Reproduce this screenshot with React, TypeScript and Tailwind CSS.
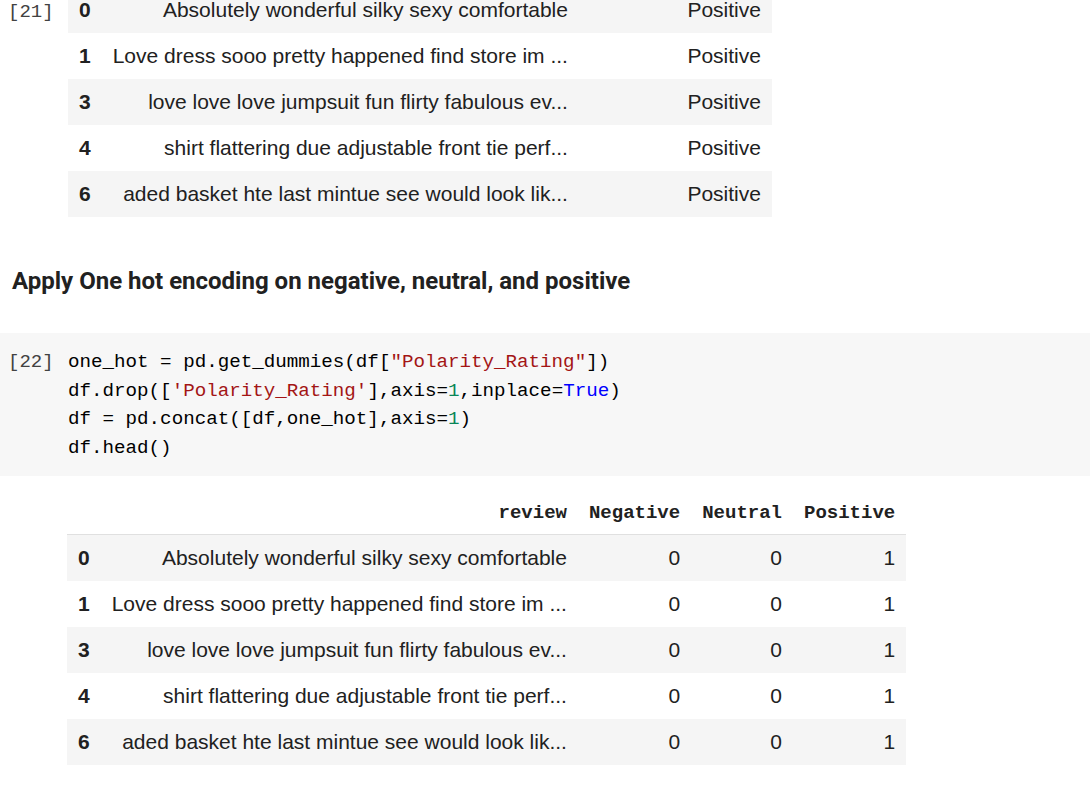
import React from 'react';

const mono = "font-['Liberation_Mono','DejaVu_Sans_Mono',monospace]";
const sans = "font-['Liberation_Sans',Arial,sans-serif]";

const reviews = [
  { idx: '0', text: 'Absolutely wonderful silky sexy comfortable' },
  { idx: '1', text: 'Love dress sooo pretty happened find store im ...' },
  { idx: '3', text: 'love love love jumpsuit fun flirty fabulous ev...' },
  { idx: '4', text: 'shirt flattering due adjustable front tie perf...' },
  { idx: '6', text: 'aded basket hte last mintue see would look lik...' },
];

const Prompt: React.FC<{ n: number }> = ({ n }) => (
  <div className={`w-[68px] shrink-0 pl-[8px] text-[19px] text-[#424242] ${mono}`}>[{n}]</div>
);

const th = `h-[46px] px-[11px] pt-[3px] text-right font-bold text-[19px] text-[#212121] ${mono}`;
const td = 'h-[46px] px-[11px] text-right';

export default function App() {
  return (
    <div className={`w-[1090px] h-[791px] overflow-hidden bg-white text-[#212121] ${sans}`}>
      {/* output of cell 21, scrolled: its header sits above the window */}
      <div className="flex">
        <div className="pt-[1px] leading-[22px]">
          <Prompt n={21} />
        </div>
        <table className="-mt-[13px] border-collapse text-[21px] leading-[20px]">
          <tbody>
            {reviews.map((r, i) => (
              <tr key={r.idx} className={i % 2 === 0 ? 'bg-[#f5f5f5]' : 'bg-white'}>
                <td className={`${td} text-left font-bold`}>{r.idx}</td>
                <td className={td}>{r.text}</td>
                <td className={`${td} w-[193px]`}>Positive</td>
              </tr>
            ))}
          </tbody>
        </table>
      </div>

      <h2 className="mt-[50px] pl-[12px] text-[24px] leading-[28px] font-bold text-[#212121] font-['Roboto',sans-serif]">
        Apply One hot encoding on negative, neutral, and positive
      </h2>

      {/* code cell 22 */}
      <div className="mt-[38px] flex bg-[#f7f7f7] pt-[15px] pb-[13px] leading-[28.7px]">
        <Prompt n={22} />
        <pre className={`text-[19.2px] leading-[28.7px] text-black ${mono}`}>
          one_hot = pd.get_dummies(df[<span className="text-[#a31515]">"Polarity_Rating"</span>]){'\n'}
          df.drop([<span className="text-[#a31515]">'Polarity_Rating'</span>],axis=<span className="text-[#098658]">1</span>,inplace=<span className="text-[#0000ff]">True</span>){'\n'}
          df = pd.concat([df,one_hot],axis=<span className="text-[#098658]">1</span>){'\n'}
          df.head()
        </pre>
      </div>

      {/* output of cell 22 */}
      <div className="mt-[13px] flex">
        <div className="w-[67px] shrink-0" />
        <table className="border-collapse text-[21px] leading-[24px]">
          <thead>
            <tr className="border-b border-[#e0e0e0]">
              <th className={th}></th>
              <th className={th}>review</th>
              <th className={th}>Negative</th>
              <th className={th}>Neutral</th>
              <th className={th}>Positive</th>
            </tr>
          </thead>
          <tbody>
            {reviews.map((r, i) => (
              <tr key={r.idx} className={i % 2 === 0 ? 'bg-[#f5f5f5]' : 'bg-white'}>
                <td className={`${td} text-left font-bold`}>{r.idx}</td>
                <td className={td}>{r.text}</td>
                <td className={td}>0</td>
                <td className={td}>0</td>
                <td className={td}>1</td>
              </tr>
            ))}
          </tbody>
        </table>
      </div>
    </div>
  );
}
